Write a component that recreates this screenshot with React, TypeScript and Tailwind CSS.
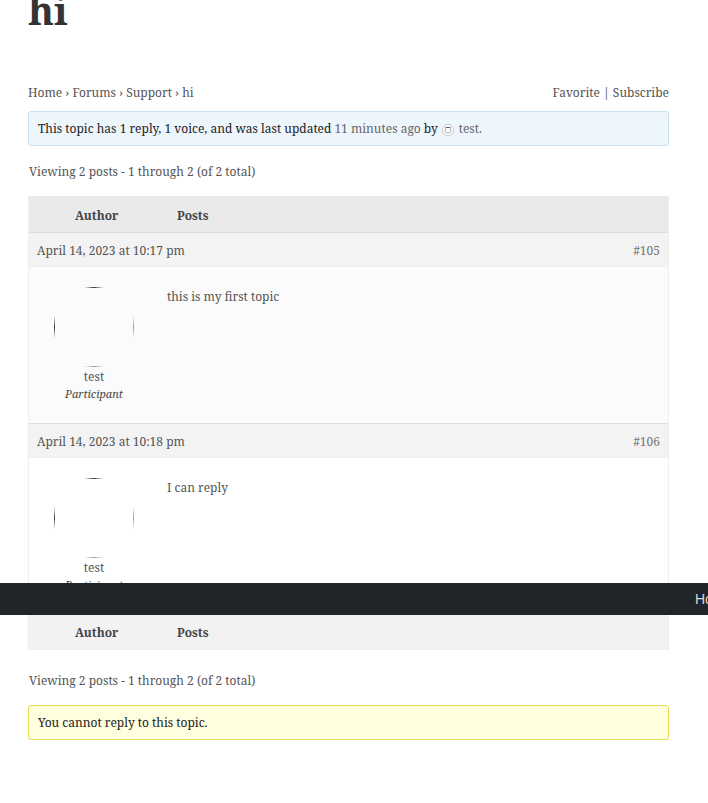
const serif = { fontFamily: '"Noto Serif", "Droid Serif", "DejaVu Serif", serif' };

function Avatar() {
  return (
    <svg width="80" height="80" viewBox="0 0 80 80" className="block">
      <defs>
        <linearGradient id="hDark" x1="0" x2="1" y1="0" y2="0">
          <stop offset="0" stopColor="#555" stopOpacity="0" />
          <stop offset="0.5" stopColor="#333" />
          <stop offset="1" stopColor="#555" stopOpacity="0" />
        </linearGradient>
        <linearGradient id="hLight" x1="0" x2="1" y1="0" y2="0">
          <stop offset="0" stopColor="#aaa" stopOpacity="0" />
          <stop offset="0.5" stopColor="#999" />
          <stop offset="1" stopColor="#aaa" stopOpacity="0" />
        </linearGradient>
        <linearGradient id="vDark" x1="0" x2="0" y1="0" y2="1">
          <stop offset="0" stopColor="#555" stopOpacity="0" />
          <stop offset="0.5" stopColor="#333" />
          <stop offset="1" stopColor="#555" stopOpacity="0" />
        </linearGradient>
        <linearGradient id="vLight" x1="0" x2="0" y1="0" y2="1">
          <stop offset="0" stopColor="#aaa" stopOpacity="0" />
          <stop offset="0.5" stopColor="#999" />
          <stop offset="1" stopColor="#aaa" stopOpacity="0" />
        </linearGradient>
      </defs>
      <rect x="30" y="0" width="20" height="1" fill="url(#hDark)" />
      <rect x="30" y="79" width="20" height="1" fill="url(#hLight)" />
      <rect x="0" y="28" width="1" height="24" fill="url(#vDark)" />
      <rect x="79" y="28" width="1" height="24" fill="url(#vLight)" />
    </svg>
  );
}

function PostHeader({ date, id }: { date: string; id: string }) {
  return (
    <div className="flex h-[34px] items-center justify-between border-b border-[#eeeeee] bg-[#f3f3f3] px-2 pt-[2px] text-[12px] text-[#555]">
      <span>{date}</span>
      <span className="text-[#777]">{id}</span>
    </div>
  );
}

function Post({ date, id, text, bg }: { date: string; id: string; text: string; bg: string }) {
  return (
    <div>
      <PostHeader date={date} id={id} />
      <div className={`flex h-[156px] ${bg}`}>
        <div className="flex w-[130px] flex-col items-center pt-[20px]">
          <Avatar />
          <div className="mt-px text-[12px] leading-[18px] text-[#555]">test</div>
          <div className="text-[11px] italic leading-[16px] text-[#444]">Participant</div>
        </div>
        <div className="pl-[8px] pt-[21px] text-[12px] leading-[18px] text-[#555]">{text}</div>
      </div>
    </div>
  );
}

export default function App() {
  return (
    <div className="relative h-[803px] w-[708px] overflow-hidden bg-white" style={serif}>
      <div className="px-7">
        <h1 className="-mt-[17px] h-[86px] text-[39px] font-bold leading-[54px] text-[#333]">hi</h1>
        <div className="mt-[15px] flex h-[18px] w-[641px] items-center justify-between text-[12px] text-[#555]">
          <span>Home › Forums › Support › hi</span>
          <span>Favorite | Subscribe</span>
        </div>
        <div className="mt-[9px] flex h-[35px] w-[641px] items-center rounded-[3px] border border-[#c9e0ee] bg-[#eef6fd] pl-[9px] text-[12px] text-[#222]">
          <span>This topic has 1 reply, 1 voice, and was last updated </span>
          <span className="ml-[3px] text-[#666]">11 minutes ago</span>
          <span className="ml-[3px]">by</span>
          <svg width="14" height="14" viewBox="0 0 14 14" className="ml-[3px] mt-[3px]">
            <circle cx="7" cy="7" r="5.7" fill="#f7f7f7" stroke="#d0d0d0" />
            <rect x="4.5" y="4.5" width="5" height="5" rx="0.8" fill="#fff" stroke="#999" strokeWidth="0.7" />
            <path d="M4.5 4.5 H9.5" stroke="#555" strokeWidth="0.8" />
          </svg>
          <span className="ml-[4px] text-[#666]">test.</span>
        </div>
        <div className="mt-[17px] pl-px text-[12px] leading-[18px] text-[#555]">Viewing 2 posts - 1 through 2 (of 2 total)</div>
        <div className="mt-[15px] w-[641px] border-x border-b border-[#eeeeee]">
          <div className="flex h-[37px] items-center border-b border-[#dddddd] bg-[#eaeaea] pt-[4px] text-[12px] font-bold text-[#444]">
            <div className="w-[148px] pl-[46px]">Author</div>
            <div>Posts</div>
          </div>
          <Post date="April 14, 2023 at 10:17 pm" id="#105" text="this is my first topic" bg="bg-[#fbfbfb]" />
          <div className="border-t border-[#dddddd]" />
          <Post date="April 14, 2023 at 10:18 pm" id="#106" text="I can reply" bg="bg-white" />
          <div className="flex h-[35px] items-center border-t border-[#eeeeee] bg-[#f2f2f2] pt-[2px] text-[12px] font-bold text-[#444]">
            <div className="w-[148px] pl-[46px]">Author</div>
            <div>Posts</div>
          </div>
        </div>
        <div className="mt-[22px] pl-px text-[12px] leading-[18px] text-[#555]">Viewing 2 posts - 1 through 2 (of 2 total)</div>
        <div className="mt-[15px] flex h-[35px] w-[641px] items-center rounded-[3px] border border-[#e6db55] bg-[#ffffe0] pl-[9px] text-[12px] text-[#222]">
          You cannot reply to this topic.
        </div>
      </div>
      <div className="absolute left-0 top-[583px] h-[32px] w-[708px] overflow-hidden bg-[#212529]">
        <span className="absolute left-[695px] top-[8px] whitespace-nowrap text-[14px] leading-[17px] text-[#d8d8d8]" style={{ fontFamily: '"Liberation Sans", sans-serif' }}>Home</span>
      </div>
    </div>
  );
}
